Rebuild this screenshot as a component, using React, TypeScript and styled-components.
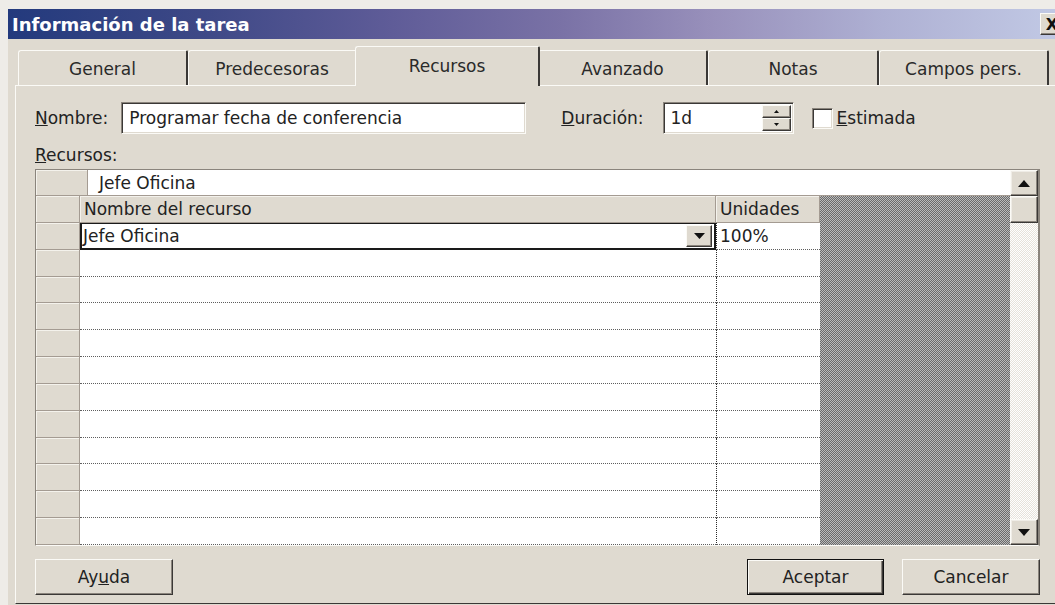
import React from "react";
import styled, { createGlobalStyle, css } from "styled-components";

const FACE = "#dfdad0";
const LIGHT = "#fbfaf6";
const SHADOW = "#8a847c";
const DARK = "#3a3836";
const GRIDLINE = "#a49b92";

const GlobalStyle = createGlobalStyle`
  * { box-sizing: border-box; }
  html, body { margin: 0; padding: 0; background: #eeece8; }
  body {
    font-family: "DejaVu Sans", Verdana, sans-serif;
    font-size: 17px;
    color: #222;
  }
`;

const Screen = styled.div`
  width: 1055px;
  height: 605px;
  overflow: hidden;
  padding: 9px 0 0 8px;
  background: #eeece8;
`;

const Window = styled.div`
  width: 1066px;
  height: 596px;
  background: ${FACE};
  display: flex;
  flex-direction: column;
`;

const TitleBar = styled.div`
  flex: none;
  height: 30px;
  display: flex;
  align-items: center;
  justify-content: space-between;
  padding: 0 10px 0 4px;
  background: linear-gradient(
    90deg,
    #233a7d 0%,
    #3d4886 18%,
    #5f5c98 36%,
    #7a72a6 52%,
    #9890bb 66%,
    #aeb0d3 82%,
    #c3cbe6 100%
  );
  color: #fff;
  font-weight: bold;
  font-size: 18px;
  white-space: nowrap;
`;

const CloseButton = styled.div`
  width: 24px;
  height: 22px;
  display: flex;
  align-items: center;
  justify-content: center;
  background: ${FACE};
  border: 1px solid;
  border-color: ${LIGHT} ${DARK} ${DARK} ${LIGHT};
  box-shadow: inset -1px -1px 0 ${SHADOW};
  color: #111;
  font-size: 16px;
  font-weight: bold;
`;

const Body = styled.div`
  flex: 1;
  display: flex;
  flex-direction: column;
  padding: 7px 0 0 7px;
`;

const TabStrip = styled.div`
  flex: none;
  height: 39px;
  display: flex;
  align-items: flex-end;
  padding-left: 3px;
  position: relative;
  z-index: 1;
`;

const Tab = styled.div<{ $w: number; $active?: boolean }>`
  flex: none;
  width: ${(p) => p.$w}px;
  height: 35px;
  display: flex;
  align-items: center;
  justify-content: center;
  padding-top: 1px;
  background: ${FACE};
  border-top: 1px solid ${LIGHT};
  border-left: 1px solid ${LIGHT};
  border-right: 2px solid ${DARK};
  border-top-left-radius: 3px;
  border-top-right-radius: 2px;
  color: #2a2a2a;
  white-space: nowrap;
  ${(p) =>
    p.$active &&
    css`
      width: ${p.$w + 4}px;
      height: 40px;
      margin: 0 -2px -1px;
      padding: 0 0 1px;
      position: relative;
      z-index: 2;
    `}
`;

const Panel = styled.div`
  flex: none;
  height: 519px;
  border-top: 1px solid ${LIGHT};
  border-left: 1px solid ${LIGHT};
  border-bottom: 1px solid ${DARK};
  padding: 16px 0 0 19px;
  display: flex;
  flex-direction: column;
`;

const FieldRow = styled.div`
  flex: none;
  height: 32px;
  display: flex;
  align-items: center;
`;

const Label = styled.span<{ $gap?: number; $lead?: number }>`
  white-space: nowrap;
  margin-left: ${(p) => p.$lead ?? 0}px;
  margin-right: ${(p) => p.$gap ?? 0}px;
`;

const Sunken = styled.div<{ $w: number }>`
  width: ${(p) => p.$w}px;
  height: 32px;
  background: #fff;
  border: 1px solid;
  border-color: ${SHADOW} ${LIGHT} ${LIGHT} ${SHADOW};
  box-shadow: inset 1px 1px 0 ${DARK}, inset -1px -1px 0 ${FACE};
  display: flex;
  align-items: center;
  padding: 2px 2px 2px 7px;
  white-space: nowrap;
`;

const SunkenText = styled.span`
  flex: 1;
`;

const Spinner = styled.div`
  width: 29px;
  align-self: stretch;
  display: flex;
  flex-direction: column;
`;

const SpinHalf = styled.div`
  flex: 1;
  display: flex;
  align-items: center;
  justify-content: center;
  background: ${FACE};
  border: 1px solid;
  border-color: ${LIGHT} ${DARK} ${DARK} ${LIGHT};
  box-shadow: inset -1px -1px 0 ${SHADOW};
`;

const CheckBox = styled.div`
  width: 21px;
  height: 21px;
  margin: 0 4px 0 18px;
  background: #fff;
  border: 1px solid;
  border-color: ${SHADOW} ${LIGHT} ${LIGHT} ${SHADOW};
  box-shadow: inset 1px 1px 0 ${DARK}, inset -1px -1px 0 ${FACE};
`;

const SectionLabel = styled.div`
  flex: none;
  height: 20px;
  line-height: 20px;
  margin-top: 11px;
`;

const GridFrame = styled.div`
  flex: none;
  width: 1005px;
  height: 377px;
  margin-top: 4px;
  display: flex;
  border-top: 1px solid ${SHADOW};
  border-left: 1px solid ${SHADOW};
  border-right: 2px solid ${SHADOW};
  border-bottom: 1px solid ${LIGHT};
  background: #fff;
  overflow: hidden;
`;

const GridMain = styled.div`
  width: 974px;
  flex: none;
  display: flex;
  flex-direction: column;
`;

const EntryRow = styled.div`
  flex: none;
  height: 26px;
  display: flex;
  border-bottom: 1px solid ${GRIDLINE};
`;

const EntryHead = styled.div`
  width: 52px;
  background: ${FACE};
  border-right: 1px solid ${GRIDLINE};
  box-shadow: inset 1px 1px 0 #f4f2ec;
`;

const EntryField = styled.div`
  flex: 1;
  display: flex;
  align-items: center;
  padding-left: 11px;
`;

const Sheet = styled.div`
  flex: 1;
  display: grid;
  grid-template-columns: 44px 636px 104px 190px;
  grid-template-rows: repeat(13, 1fr);
`;

const RowHead = styled.div`
  background: ${FACE};
  border-right: 1px solid ${GRIDLINE};
  border-bottom: 1px solid ${GRIDLINE};
  box-shadow: inset 1px 1px 0 #f4f2ec;
`;

const HeadCell = styled.div`
  background: ${FACE};
  border-right: 1px solid ${GRIDLINE};
  border-bottom: 1px solid ${GRIDLINE};
  box-shadow: inset 1px 1px 0 #f4f2ec;
  display: flex;
  align-items: center;
  padding-left: 4px;
  white-space: nowrap;
`;

const DataCell = styled.div<{ $units?: boolean; $active?: boolean }>`
  background: #fff;
  border-bottom: 1px dotted #5e5e5e;
  display: flex;
  align-items: center;
  padding-left: 3px;
  white-space: nowrap;
  ${(p) =>
    p.$units &&
    css`
      border-left: 1px dotted #2a2a2a;
    `}
  ${(p) =>
    p.$active &&
    css`
      border: 2px solid #1a1a1a;
      border-top-width: 1px;
      padding: 0 2px 0 1px;
    `}
`;

const CellText = styled.span`
  flex: 1;
`;

const DropButton = styled.div`
  width: 26px;
  height: 22px;
  display: flex;
  align-items: center;
  justify-content: center;
  background: ${FACE};
  border: 1px solid;
  border-color: ${LIGHT} ${DARK} ${DARK} ${LIGHT};
  box-shadow: inset -1px -1px 0 ${SHADOW};
`;

/* dithered fill for the unused area right of the columns */
const Hatch = styled.div`
  grid-column: 4;
  grid-row: 1 / -1;
  background: conic-gradient(#6a6a6a 25%, #bababa 0 50%, #6a6a6a 0 75%, #bababa 0) 0 0 / 2px 2px;
`;

const ScrollBar = styled.div`
  width: 28px;
  flex: none;
  display: flex;
  flex-direction: column;
`;

const ScrollButton = styled.div<{ $h: number }>`
  flex: none;
  height: ${(p) => p.$h}px;
  display: flex;
  align-items: center;
  justify-content: center;
  background: ${FACE};
  border: 1px solid;
  border-color: ${LIGHT} ${DARK} ${DARK} ${LIGHT};
  box-shadow: inset -1px -1px 0 ${SHADOW}, inset 1px 1px 0 #efece6;
`;

const Track = styled.div`
  flex: 1;
  background: conic-gradient(#ffffff 25%, #e6e2da 0 50%, #ffffff 0 75%, #e6e2da 0) 0 0 / 2px 2px;
`;

const ButtonRow = styled.div`
  flex: none;
  width: 1005px;
  margin-top: 13px;
  display: flex;
  align-items: center;
`;

const Spacer = styled.div`
  flex: 1;
`;

const PushButton = styled.div<{ $default?: boolean; $gap?: number }>`
  width: ${(p) => (p.$default ? 137 : 138)}px;
  height: 36px;
  margin-left: ${(p) => p.$gap ?? 0}px;
  display: flex;
  align-items: center;
  justify-content: center;
  background: ${FACE};
  border: 1px solid;
  border-color: ${LIGHT} ${DARK} ${DARK} ${LIGHT};
  box-shadow: inset -1px -1px 0 ${SHADOW};
  ${(p) =>
    p.$default &&
    css`
      border: 1px solid #111;
      box-shadow: inset 1px 1px 0 ${LIGHT}, inset -1px -1px 0 ${DARK}, inset -2px -2px 0 ${SHADOW};
    `}
`;

const Arrow = ({ dir, w, h }: { dir: "up" | "down"; w: number; h: number }) => (
  <svg width={w} height={h} viewBox={`0 0 ${w} ${h}`}>
    <polygon
      points={dir === "up" ? `0,${h} ${w},${h} ${w / 2},0` : `0,0 ${w},0 ${w / 2},${h}`}
      fill="#111"
    />
  </svg>
);

const tabs = [
  { label: "General", w: 170 },
  { label: "Predecesoras", w: 169 },
  { label: "Recursos", w: 181, active: true },
  { label: "Avanzado", w: 170 },
  { label: "Notas", w: 171 },
  { label: "Campos pers.", w: 170 },
];

const EMPTY_ROWS = 11;

export default function App() {
  return (
    <Screen>
      <GlobalStyle />
      <Window>
        <TitleBar>
          <span>Información de la tarea</span>
          <CloseButton>X</CloseButton>
        </TitleBar>
        <Body>
          <TabStrip>
            {tabs.map((t) => (
              <Tab key={t.label} $w={t.w} $active={t.active}>
                {t.label}
              </Tab>
            ))}
          </TabStrip>
          <Panel>
            <FieldRow>
              <Label $gap={13}>
                <u>N</u>ombre:
              </Label>
              <Sunken $w={405}>
                <SunkenText>Programar fecha de conferencia</SunkenText>
              </Sunken>
              <Label $lead={35} $gap={19}>
                <u>D</u>uración:
              </Label>
              <Sunken $w={131}>
                <SunkenText>1d</SunkenText>
                <Spinner>
                  <SpinHalf>
                    <Arrow dir="up" w={5} h={3} />
                  </SpinHalf>
                  <SpinHalf>
                    <Arrow dir="down" w={5} h={3} />
                  </SpinHalf>
                </Spinner>
              </Sunken>
              <CheckBox />
              <Label>
                <u>E</u>stimada
              </Label>
            </FieldRow>

            <SectionLabel>
              <u>R</u>ecursos:
            </SectionLabel>

            <GridFrame>
              <GridMain>
                <EntryRow>
                  <EntryHead />
                  <EntryField>Jefe Oficina</EntryField>
                </EntryRow>
                <Sheet>
                  <Hatch />
                  <RowHead />
                  <HeadCell>Nombre del recurso</HeadCell>
                  <HeadCell>Unidades</HeadCell>

                  <RowHead />
                  <DataCell $active>
                    <CellText>Jefe Oficina</CellText>
                    <DropButton>
                      <Arrow dir="down" w={11} h={6} />
                    </DropButton>
                  </DataCell>
                  <DataCell $units>100%</DataCell>

                  {Array.from({ length: EMPTY_ROWS }, (_, i) => (
                    <React.Fragment key={i}>
                      <RowHead />
                      <DataCell />
                      <DataCell $units />
                    </React.Fragment>
                  ))}
                </Sheet>
              </GridMain>
              <ScrollBar>
                <ScrollButton $h={26}>
                  <Arrow dir="up" w={12} h={7} />
                </ScrollButton>
                <ScrollButton $h={27} />
                <Track />
                <ScrollButton $h={26}>
                  <Arrow dir="down" w={12} h={7} />
                </ScrollButton>
              </ScrollBar>
            </GridFrame>

            <ButtonRow>
              <PushButton>
                Ay<u>u</u>da
              </PushButton>
              <Spacer />
              <PushButton $default>Aceptar</PushButton>
              <PushButton $gap={18}>Cancelar</PushButton>
            </ButtonRow>
          </Panel>
        </Body>
      </Window>
    </Screen>
  );
}
